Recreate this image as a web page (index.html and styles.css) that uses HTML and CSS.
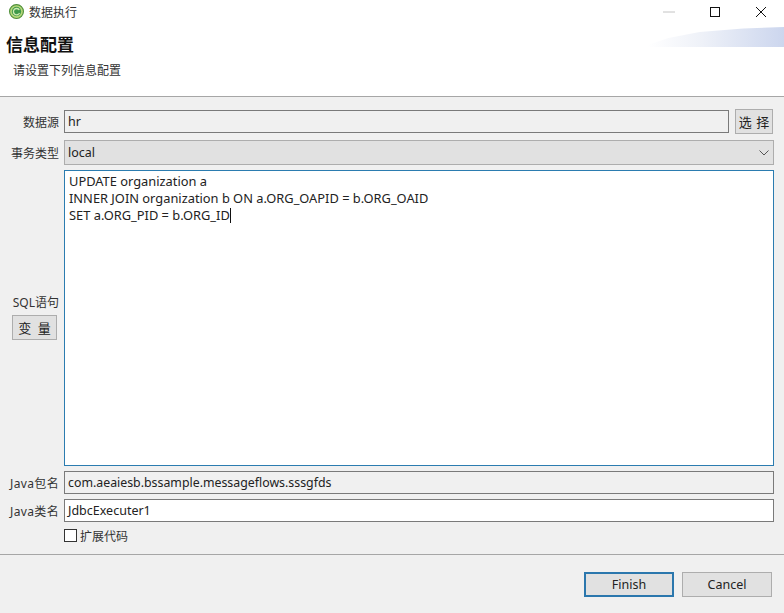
FILE: index.html
```html
<!DOCTYPE html>
<html lang="zh">
<head>
<meta charset="utf-8">
<title>数据执行</title>
<link rel="stylesheet" href="styles.css">
</head>
<body>
<div class="window">
  <header class="header">
    <div class="banner"></div>
    <div class="titlebar">
      <svg class="app-icon" width="15" height="15" viewBox="0 0 16 16">
        <circle cx="8" cy="8" r="7.4" fill="#b5d77a" stroke="#4f8f3a" stroke-width="1.2"/>
        <circle cx="8" cy="8" r="5" fill="#3f9a4a"/>
        <path d="M11 6.4A3.4 3.4 0 1 0 11.2 9.6" fill="none" stroke="#cfe8b0" stroke-width="1.4"/>
      </svg>
      <span class="window-title">数据执行</span>
      <div class="window-controls">
        <span class="ctl"><svg width="12" height="12" viewBox="0 0 12 12"><path d="M0 6h12" stroke="#c4c4c4" stroke-width="1"/></svg></span>
        <span class="ctl"><svg width="12" height="12" viewBox="0 0 12 12"><rect x="1.5" y="1.5" width="9" height="9" fill="none" stroke="#111" stroke-width="1"/></svg></span>
        <span class="ctl"><svg width="12" height="12" viewBox="0 0 12 12"><path d="M1 1l10 10M11 1L1 11" stroke="#111" stroke-width="1"/></svg></span>
      </div>
    </div>
    <h1 class="page-title">信息配置</h1>
    <p class="page-desc">请设置下列信息配置</p>
  </header>

  <main class="form">
    <label class="label">数据源</label>
    <div class="source-row">
      <div class="field readonly">hr</div>
      <button class="btn btn-pick" type="button">选 择</button>
    </div>

    <label class="label">事务类型</label>
    <div class="field select">
      <span>local</span>
      <svg width="10" height="6" viewBox="0 0 10 6"><path d="M.5.5L5 5 9.5.5" fill="none" stroke="#555" stroke-width="1"/></svg>
    </div>

    <div class="sql-side">
      <label class="label">SQL语句</label>
      <button class="btn btn-var" type="button">变 量</button>
    </div>
    <div class="sql-box">
      <div>UPDATE organization a</div>
      <div>INNER JOIN organization b ON a.ORG_OAPID = b.ORG_OAID</div>
      <div>SET a.ORG_PID = b.ORG_ID<span class="caret"></span></div>
    </div>

    <label class="label label-java">Java包名</label>
    <div class="field package">com.aeaiesb.bssample.messageflows.sssgfds</div>

    <label class="label label-java">Java类名</label>
    <div class="field">JdbcExecuter1</div>

    <span></span>
    <div class="check-row"><span class="checkbox"></span><span>扩展代码</span></div>
  </main>

  <footer class="footer">
    <button class="btn btn-action btn-default" type="button">Finish</button>
    <button class="btn btn-action" type="button">Cancel</button>
  </footer>
</div>
</body>
</html>
```
FILE: styles.css
```css
* { box-sizing: border-box; }
html, body { margin: 0; height: 100%; }
body {
  font-family: "Noto Sans", "Noto Sans CJK SC", sans-serif;
  font-size: 12px;
  color: #222;
  background: #f0f0f0;
}
.window {
  width: 784px;
  height: 613px;
  display: flex;
  flex-direction: column;
  overflow: hidden;
}
.header {
  position: relative;
  height: 97px;
  flex: none;
  background: #fff;
  border-bottom: 1px solid #a6a6a6;
}
.banner {
  position: absolute;
  top: 27px;
  right: 0;
  width: 136px;
  height: 20px;
  background: linear-gradient(90deg, #ffffff 0%, #eef1f8 40%, #ccd6ee 100%);
  clip-path: polygon(0 90%, 15% 55%, 38% 25%, 70% 8%, 100% 0, 100% 100%, 0 100%);
}
.titlebar {
  height: 23px;
  display: flex;
  align-items: center;
  padding-left: 9px;
}
.app-icon { flex: none; }
.window-title { margin-left: 5px; color: #333; font-size: 12px; }
.window-controls { margin-left: auto; display: flex; }
.ctl {
  width: 46px;
  height: 23px;
  display: flex;
  align-items: center;
  justify-content: center;
}
.page-title {
  margin: 11px 0 0 6px;
  font-size: 17px;
  line-height: 22px;
  font-weight: 700;
  color: #111;
}
.page-desc {
  margin: 5px 0 0 13px;
  font-size: 12px;
  line-height: 20px;
  color: #333;
}
.form {
  flex: none;
  height: 457px;
  padding: 12px 10px 0 0;
  display: grid;
  grid-template-columns: 59px 1fr;
  grid-template-rows: 26px 25px 296px 23px 23px 17px;
  column-gap: 5px;
  row-gap: 5px;
  align-items: center;
}
.label { text-align: right; white-space: nowrap; color: #333; }
.label-java { letter-spacing: .35px; }
.source-row { display: flex; gap: 6px; align-items: flex-start; padding-right: 1px; height: 26px; }
.field {
  height: 23px;
  line-height: 21px;
  padding: 0 3px;
  background: #fff;
  border: 1px solid #7a7a7a;
  font-size: 12.5px;
}
.readonly { background: #f0f0f0; flex: 1; margin-top: 1px; }
.package { background: #f0f0f0; font-size: 12.35px; }
.select {
  height: 25px;
  line-height: 23px;
  background: #e1e1e1;
  border-color: #adadad;
  display: flex;
  align-items: center;
  justify-content: space-between;
  padding-right: 4px;
}
.sql-side {
  align-self: stretch;
  display: flex;
  flex-direction: column;
  align-items: flex-end;
  justify-content: flex-end;
  padding-bottom: 126px;
  gap: 4px;
}
.sql-box {
  align-self: stretch;
  background: #fff;
  border: 1px solid #2b7cb0;
  padding: 2px 4px;
  font-size: 12.85px;
  line-height: 17px;
}
.caret {
  display: inline-block;
  width: 1px;
  height: 15px;
  background: #111;
  vertical-align: -3px;
}
.btn {
  font: inherit;
  color: #222;
  background: #e1e1e1;
  border: 1px solid #adadad;
  padding: 0;
}
.btn-pick { width: 38px; height: 25px; flex: none; font-size: 13px; word-spacing: 1px; }
.btn-var { width: 45px; height: 25px; margin-right: 2px; font-size: 13px; word-spacing: 3px; }
.check-row { display: flex; align-items: center; gap: 3px; color: #333; white-space: nowrap; height: 17px; }
.checkbox {
  width: 13px;
  height: 13px;
  background: #fff;
  border: 1px solid #333;
  flex: none;
}
.footer {
  flex: 1;
  border-top: 1px solid #a6a6a6;
  display: flex;
  justify-content: flex-end;
  align-items: flex-start;
  gap: 8px;
  padding: 17px 12px 0 0;
}
.btn-action { width: 90px; height: 25px; font-size: 12.5px; }
.btn-default { border: 2px solid #2b77ad; }
```
